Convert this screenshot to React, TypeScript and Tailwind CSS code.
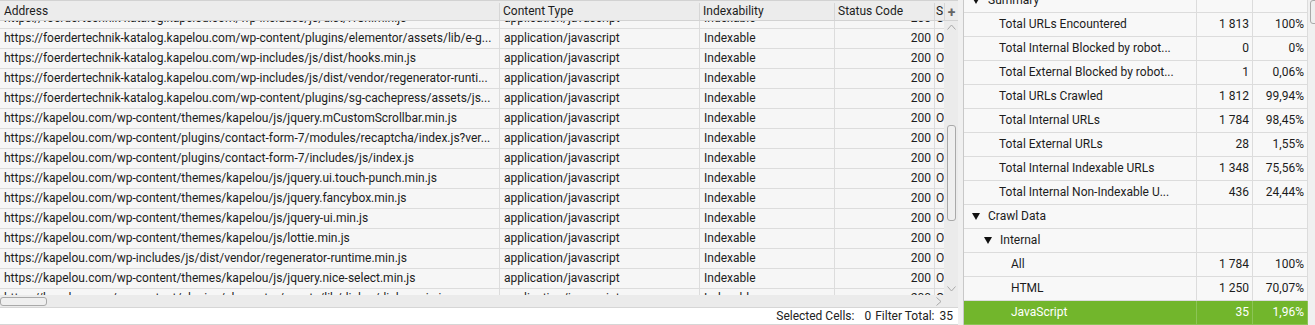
import React from "react";

const leftRows: string[] = [
  "https://foerdertechnik-katalog.kapelou.com/wp-includes/js/dist/i18n.min.js",
  "https://foerdertechnik-katalog.kapelou.com/wp-content/plugins/elementor/assets/lib/e-g...",
  "https://foerdertechnik-katalog.kapelou.com/wp-includes/js/dist/hooks.min.js",
  "https://foerdertechnik-katalog.kapelou.com/wp-includes/js/dist/vendor/regenerator-runti...",
  "https://foerdertechnik-katalog.kapelou.com/wp-content/plugins/sg-cachepress/assets/js...",
  "https://kapelou.com/wp-content/themes/kapelou/js/jquery.mCustomScrollbar.min.js",
  "https://kapelou.com/wp-content/plugins/contact-form-7/modules/recaptcha/index.js?ver...",
  "https://kapelou.com/wp-content/plugins/contact-form-7/includes/js/index.js",
  "https://kapelou.com/wp-content/themes/kapelou/js/jquery.ui.touch-punch.min.js",
  "https://kapelou.com/wp-content/themes/kapelou/js/jquery.fancybox.min.js",
  "https://kapelou.com/wp-content/themes/kapelou/js/jquery-ui.min.js",
  "https://kapelou.com/wp-content/themes/kapelou/js/lottie.min.js",
  "https://kapelou.com/wp-includes/js/dist/vendor/regenerator-runtime.min.js",
  "https://kapelou.com/wp-content/themes/kapelou/js/jquery.nice-select.min.js",
  "https://kapelou.com/wp-content/plugins/elementor/assets/lib/dialog/dialog.min.js",
];

type RRow = {
  label: string;
  num?: string;
  pct?: string;
  level: number;
  tri?: boolean;
  sel?: boolean;
};

const rightRows: RRow[] = [
  { label: "Summary", level: 0, tri: true },
  { label: "Total URLs Encountered", num: "1 813", pct: "100%", level: 2 },
  { label: "Total Internal Blocked by robot...", num: "0", pct: "0%", level: 2 },
  { label: "Total External Blocked by robot...", num: "1", pct: "0,06%", level: 2 },
  { label: "Total URLs Crawled", num: "1 812", pct: "99,94%", level: 2 },
  { label: "Total Internal URLs", num: "1 784", pct: "98,45%", level: 2 },
  { label: "Total External URLs", num: "28", pct: "1,55%", level: 2 },
  { label: "Total Internal Indexable URLs", num: "1 348", pct: "75,56%", level: 2 },
  { label: "Total Internal Non-Indexable U...", num: "436", pct: "24,44%", level: 2 },
  { label: "Crawl Data", level: 0, tri: true },
  { label: "Internal", level: 1, tri: true },
  { label: "All", num: "1 784", pct: "100%", level: 3 },
  { label: "HTML", num: "1 250", pct: "70,07%", level: 3 },
  { label: "JavaScript", num: "35", pct: "1,96%", level: 3, sel: true },
  { label: "", level: 3 },
];

function Tri() {
  return (
    <svg width="8" height="7" viewBox="0 0 8 7" className="shrink-0">
      <polygon points="0,0 8,0 4,7" fill="#111" />
    </svg>
  );
}

function ChevUp() {
  return (
    <svg width="9" height="6" viewBox="0 0 9 6">
      <polyline points="0.5,5.5 4.5,1 8.5,5.5" fill="none" stroke="#a8a8a8" strokeWidth="1" />
    </svg>
  );
}
function ChevDown() {
  return (
    <svg width="9" height="6" viewBox="0 0 9 6">
      <polyline points="0.5,0.5 4.5,5 8.5,0.5" fill="none" stroke="#a8a8a8" strokeWidth="1" />
    </svg>
  );
}
function ChevRight() {
  return (
    <svg width="6" height="9" viewBox="0 0 6 9">
      <polyline points="0.5,0.5 5,4.5 0.5,8.5" fill="none" stroke="#a8a8a8" strokeWidth="1" />
    </svg>
  );
}

export default function App() {
  return (
    <div
      className="flex h-[325px] w-[1315px] overflow-hidden bg-[#f0f0f0] text-[12px] text-[#1c1c1c]"
      style={{ fontFamily: "Roboto, 'Liberation Sans', sans-serif" }}
    >
      {/* Left panel */}
      <div className="flex w-[958px] shrink-0 flex-col">
        <div className="flex h-[307px] flex-col overflow-hidden">
          {/* header */}
          <div className="flex h-[21px] shrink-0 border-t border-b border-[#d2d2d2] bg-[#ececec] pt-[2px] leading-[17px]">
            <div className="w-[500px] shrink-0 border-r border-[#d6d6d6] pl-[4px]">Address</div>
            <div className="w-[200px] shrink-0 border-r border-[#d6d6d6] pl-[3px]">Content Type</div>
            <div className="w-[135px] shrink-0 border-r border-[#d6d6d6] pl-[3px]">Indexability</div>
            <div className="w-[100px] shrink-0 border-r border-[#d6d6d6] pl-[3px]">Status Code</div>
            <div className="w-[9px] shrink-0 overflow-hidden pl-[1px]">S</div>
            <div className="flex w-[14px] shrink-0 items-center justify-center border-l border-[#d6d6d6] text-[14px] font-bold leading-none text-[#666]">
              +
            </div>
          </div>
          {/* body */}
          <div className="flex min-h-0 flex-1">
            <div className="flex w-[944px] shrink-0 flex-col">
              <div className="min-h-0 flex-1 overflow-hidden bg-white">
                <div className="-mt-[12px]">
                  {leftRows.map((u, i) => (
                    <div key={i} className="flex h-[20px] border-b border-[#dcdcdc] bg-[#f6f6f6] leading-[19px]">
                      <div className="w-[500px] shrink-0 overflow-hidden whitespace-nowrap border-r border-[#dcdcdc] pl-[4px]">
                        {u}
                      </div>
                      <div className="w-[200px] shrink-0 border-r border-[#dcdcdc] pl-[4px]">application/javascript</div>
                      <div className="w-[135px] shrink-0 border-r border-[#dcdcdc] pl-[4px]">Indexable</div>
                      <div className="w-[100px] shrink-0 border-r border-[#dcdcdc] pr-[3px] text-right">200</div>
                      <div className="w-[9px] shrink-0 overflow-hidden whitespace-nowrap pl-[1px]">OK</div>
                    </div>
                  ))}
                </div>
              </div>
              {/* horizontal scrollbar */}
              <div className="flex h-[12px] shrink-0 items-center bg-[#ebebeb]">
                <div className="h-[9px] w-[47px] rounded-[3px] border border-[#a9a9a9] bg-[#efefef]" />
                <div className="flex-1" />
                <div className="flex w-[10px] items-center justify-center">
                  <ChevRight />
                </div>
              </div>
            </div>
            {/* vertical scrollbar */}
            <div className="flex w-[14px] shrink-0 flex-col items-center bg-[#ebebeb] pt-[3px]">
              <ChevUp />
              <div className="mt-[95px] h-[96px] w-[9px] rounded-[3px] border border-[#a9a9a9] bg-[#efefef]" />
              <div className="flex-1" />
              <div className="mb-[15px]">
                <ChevDown />
              </div>
            </div>
          </div>
        </div>
        {/* status bar */}
        <div className="flex h-[18px] shrink-0 items-center justify-end border-t border-b border-[#d6d6d6] bg-white pr-[5px] text-[#222]">
          <span>Selected Cells:</span>
          <span className="ml-[10px]">0</span>
          <span className="ml-[4px]">Filter Total:</span>
          <span className="ml-[5px]">35</span>
        </div>
      </div>

      {/* splitter */}
      <div className="w-[5px] shrink-0 bg-[#f0f0f0]" />

      {/* Right panel */}
      <div className="flex min-w-0 flex-1 border-l border-[#c8c8c8] bg-white">
        <div className="min-w-0 flex-1 overflow-hidden">
          <div className="-mt-[11px]">
            {rightRows.map((r, i) => {
              const pad = r.tri ? (r.level === 0 ? 8 : 20) : r.level === 2 ? 35 : 47;
              return (
                <div
                  key={i}
                  className={
                    "flex h-[24px] border-b leading-[23px] " +
                    (r.sel ? "border-[#8cc456] bg-[#72b62c] text-white" : "border-[#dcdcdc] bg-[#f8f8f8]")
                  }
                >
                  <div
                    className={
                      "flex w-[233px] shrink-0 items-center overflow-hidden whitespace-nowrap border-r " +
                      (r.sel ? "border-[#8cc456]" : "border-[#dcdcdc]")
                    }
                    style={{ paddingLeft: pad }}
                  >
                    {r.tri && (
                      <span className="mr-[8px] flex items-center">
                        <Tri />
                      </span>
                    )}
                    <span>{r.label}</span>
                  </div>
                  <div
                    className={
                      "w-[56px] shrink-0 border-r pr-[3px] text-right " +
                      (r.sel ? "border-[#8cc456]" : "border-[#dcdcdc]")
                    }
                  >
                    {r.num}
                  </div>
                  <div
                    className={
                      "w-[55px] shrink-0 border-r pr-[3px] text-right " +
                      (r.sel ? "border-[#8cc456]" : "border-[#dcdcdc]")
                    }
                  >
                    {r.pct}
                  </div>
                </div>
              );
            })}
          </div>
        </div>
        <div className="w-[7px] shrink-0 bg-[#f0f0f0] pl-[2px]">
          <div className="h-[24px] w-[10px] rounded-[3px] border border-[#a9a9a9] bg-[#efefef]" />
        </div>
      </div>
    </div>
  );
}
